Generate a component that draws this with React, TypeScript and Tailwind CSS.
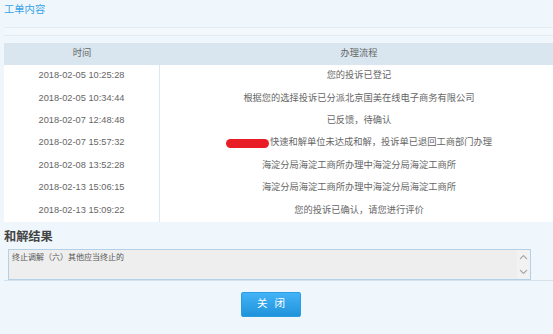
import React from 'react';

interface FlowRow {
    time: string;
    text: string;
    redacted?: boolean;
}

const rows: FlowRow[] = [
    { time: '2018-02-05 10:25:28', text: '您的投诉已登记' },
    { time: '2018-02-05 10:34:44', text: '根据您的选择投诉已分派北京国美在线电子商务有限公司' },
    { time: '2018-02-07 12:48:48', text: '已反馈，待确认' },
    { time: '2018-02-07 15:57:32', text: '快速和解单位未达成和解，投诉单已退回工商部门办理', redacted: true },
    { time: '2018-02-08 13:52:28', text: '海淀分局海淀工商所办理中海淀分局海淀工商所' },
    { time: '2018-02-13 15:06:15', text: '海淀分局海淀工商所办理中海淀分局海淀工商所' },
    { time: '2018-02-13 15:09:22', text: '您的投诉已确认，请您进行评价' },
];

const Chevron: React.FC<{ up?: boolean }> = ({ up }) => (
    <svg width="9" height="6" viewBox="0 0 9 6" className="block">
        <path
            d={up ? 'M1 5 L4.5 1.5 L8 5' : 'M1 1 L4.5 4.5 L8 1'}
            fill="none"
            stroke="#a8a8a8"
            strokeWidth="1.1"
        />
    </svg>
);

const App: React.FC = () => {
    return (
        <div
            className="w-[553px] h-[334px] overflow-hidden bg-[#eff7fd] text-[#666]"
            style={{ fontFamily: '"Liberation Sans", "Noto Sans CJK SC", sans-serif' }}
        >
            {/* Title */}
            <div className="h-[27px] pl-[4px] pt-[3px] text-[10.3px] leading-[14px] text-[#3aa2e4]">工单内容</div>
            <div className="ml-[4px] h-[9px] border-y border-[#e4ebf1] bg-[#f3f8fc]" />

            {/* Flow table */}
            <div className="mt-[7px] ml-[4px] w-[554px]">
                <div className="flex h-[22px] items-center bg-[#d9e6ef] text-[9.25px]">
                    <div className="w-[156px] text-center">时间</div>
                    <div className="flex-1 text-center">办理流程</div>
                </div>
                {rows.map((r) => (
                    <div key={r.time} className="flex h-[22.4px] bg-white text-[9.25px]">
                        <div className="flex w-[156px] items-center justify-center border-r border-[#dde8f0]">{r.time}</div>
                        <div className="flex flex-1 items-center justify-center">
                            {r.redacted && <span className="mr-[1px] inline-block h-[9px] w-[43px] rounded-full bg-[#e81d26]" />}
                            {r.text}
                        </div>
                    </div>
                ))}
            </div>

            {/* Result */}
            <div className="h-[27px] pl-[4px] pt-[7px] text-[12.2px] font-bold leading-[16px] text-[#444]">和解结果</div>
            <div className="ml-[4px] border-b border-[#d5e2ec]">
                <div className="ml-[4px] flex h-[31px] w-[523px] border border-[#b3d0e6] bg-[#eeeeee]">
                    <div className="flex-1 pl-[3px] pt-[2px] text-[8px] leading-[11px] text-[#555]">终止调解（六）其他应当终止的</div>
                    <div className="flex w-[13px] flex-col items-center justify-between bg-[#f2f2f2] py-[4px]">
                        <Chevron up />
                        <Chevron />
                    </div>
                </div>
            </div>

            {/* Close button */}
            <div className="mt-[11px] flex w-[542px] justify-center">
                <button className="flex h-[25px] w-[60px] items-center justify-center gap-[7px] rounded-[2px] border border-[#2a9de2] bg-gradient-to-b from-[#44b3f8] to-[#1d93da] text-[10.5px] text-white">
                    <span>关</span>
                    <span>闭</span>
                </button>
            </div>
        </div>
    );
};

export default App;
